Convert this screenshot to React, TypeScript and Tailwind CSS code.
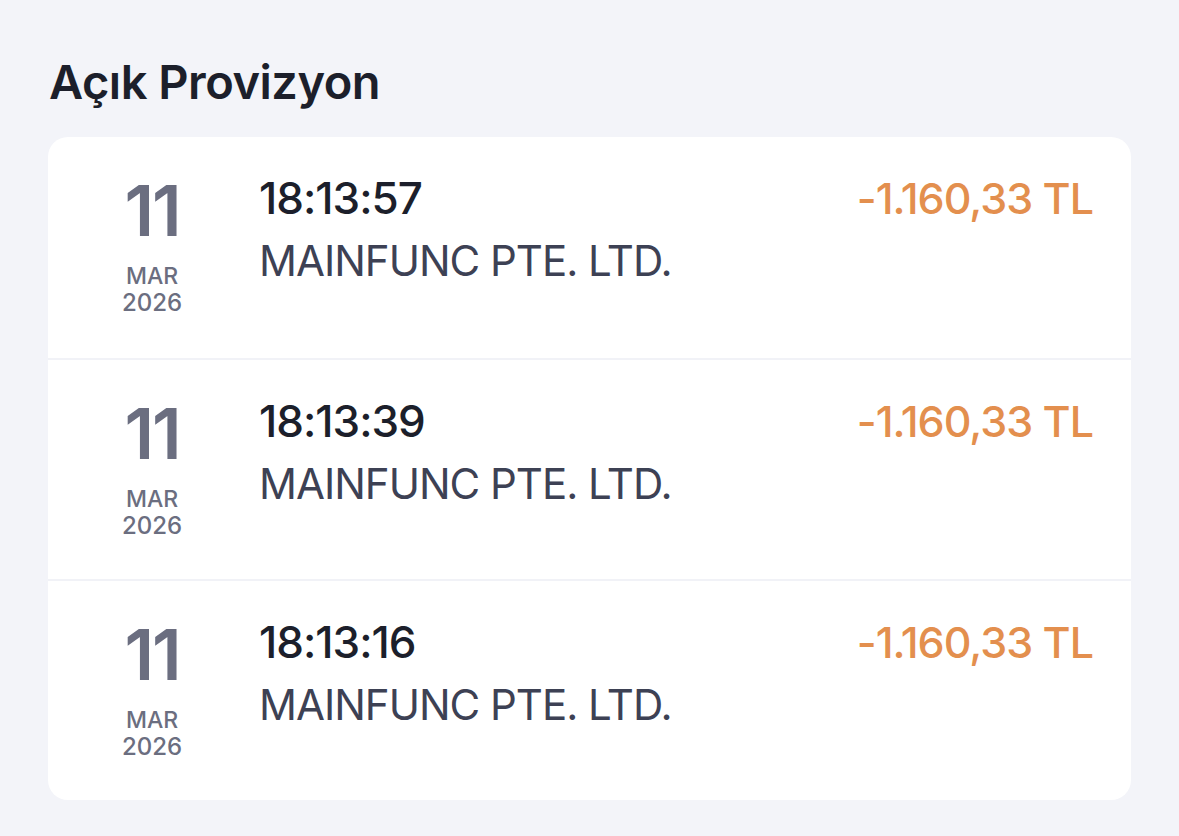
import React from "react";

const rows = [
  { time: "18:13:57" },
  { time: "18:13:39" },
  { time: "18:13:16" },
];

export default function App() {
  return (
    <div
      className="w-[1179px] h-[836px] bg-[#f3f4f9] pt-[52px] px-[48px]"
      style={{ fontFamily: "Inter, 'Noto Sans', sans-serif" }}
    >
      <h1 className="pl-[1px] text-[47px] leading-[60px] font-semibold text-[#1c1f2b] tracking-[-0.5px]">
        Açık Provizyon
      </h1>
      <div className="mt-[25px] bg-white rounded-[20px] overflow-hidden">
        {rows.map((r, i) => (
          <div
            key={i}
            className={`flex h-[221px] pt-[39px] pl-[29px] pr-[38px] ${
              i > 0 ? "border-t-2 border-[#f1f2f7]" : ""
            }`}
          >
            <div className="w-[150px] flex flex-col items-center text-[#6b6e80]">
              <div className="text-[70px] leading-[70px] font-semibold tracking-[-2px]">11</div>
              <div className="mt-[17px] text-[23px] leading-[26px] font-medium">MAR</div>
              <div className="text-[24px] leading-[28px] font-medium">2026</div>
            </div>
            <div className="ml-[32px] flex-1 flex flex-col">
              <div className="text-[44px] leading-[44px] font-medium text-[#1c1f2b] tracking-[-1px]">
                {r.time}
              </div>
              <div className="mt-[20px] text-[42px] leading-[42px] font-normal text-[#3d4154] tracking-[-1px]">
                MAINFUNC PTE. LTD.
              </div>
            </div>
            <div className="text-[43px] leading-[44px] font-medium text-[#e38f4e] tracking-[-1px]">
              -1.160,33 TL
            </div>
          </div>
        ))}
      </div>
    </div>
  );
}
